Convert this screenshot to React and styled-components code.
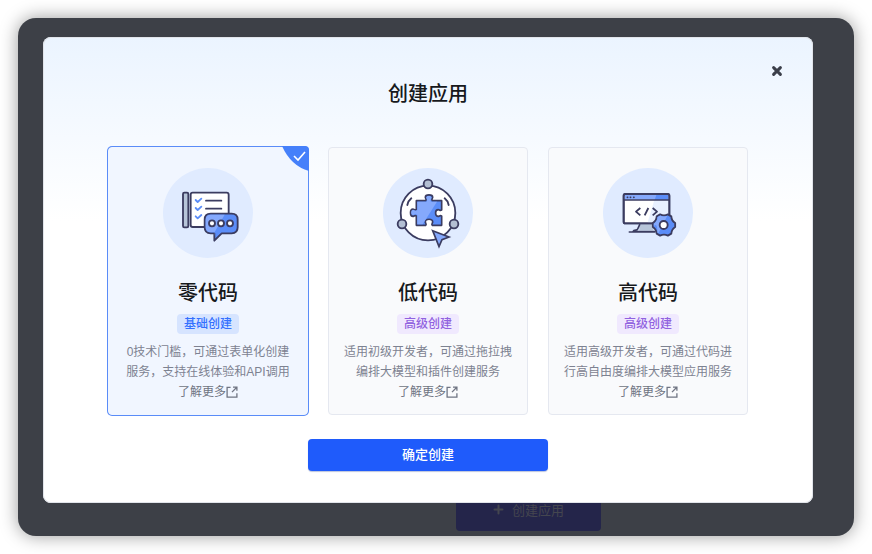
import { useState } from 'react';
import styled, { createGlobalStyle } from 'styled-components';

const ink = '#3b3c60';

const GlobalStyle = createGlobalStyle`
  * {
    box-sizing: border-box;
  }

  body {
    margin: 0;
    background: #ffffff;
    font-family: 'Liberation Sans', 'Noto Sans CJK SC', sans-serif;
  }

  h2,
  h3,
  p {
    margin: 0;
    font-weight: 500;
  }
`;

const Page = styled.main`
  padding: 18px;
`;

const Window = styled.div`
  display: grid;
  border-radius: 18px;
  background: #3d4047;
  box-shadow: 0 0 18px rgba(0, 0, 0, 0.4);
`;

const Backdrop = styled.div`
  grid-area: 1 / 1;
  display: flex;
  justify-content: center;
  align-items: flex-end;
  padding: 0 0 5px 185px;
`;

const BackdropButton = styled.button`
  display: flex;
  align-items: center;
  justify-content: center;
  gap: 8px;
  width: 145px;
  height: 40px;
  padding-bottom: 4px;
  border: 0;
  border-radius: 4px;
  background: #24254a;
  color: #44464f;
  font: inherit;
  font-size: 13px;
`;

const Modal = styled.section`
  grid-area: 1 / 1;
  z-index: 1;
  display: flex;
  flex-direction: column;
  align-items: center;
  margin: 19px 41px 33px 25px;
  padding: 24px 26px 32px;
  border-radius: 8px;
  background: linear-gradient(#ebf4ff, #ffffff 184px);
  box-shadow: inset 0 0 0 1px #e1e4ea;
`;

const CloseButton = styled.button`
  display: flex;
  align-self: flex-end;
  padding: 4px;
  border: 0;
  background: none;
  color: #3b3f4a;
`;

const ModalTitle = styled.h2`
  font-size: 20px;
  line-height: 26px;
  color: #17191c;
`;

const CardList = styled.div`
  display: grid;
  grid-template-columns: repeat(3, 200px);
  gap: 20px;
  margin: 40px 0 24px;
`;

const Card = styled.label`
  position: relative;
  display: flex;
  flex-direction: column;
  align-items: center;
  padding: 20px 14px 12px;
  border: 1px solid ${({ $active }) => ($active ? '#f1f6ff' : '#e5e8f0')};
  border-radius: 4px;
  background: ${({ $active }) => ($active ? '#f1f6ff' : '#f9fafc')};
  box-shadow: ${({ $active }) => ($active ? '0 0 0 1px #5a8cf8' : 'none')};
  text-align: center;
  cursor: pointer;
`;

const CardRadio = styled.input`
  position: absolute;
  opacity: 0;
`;

const CheckCorner = styled.svg`
  position: absolute;
  top: -2px;
  right: -2px;
`;

const CardTitle = styled.h3`
  margin: 21px 0 7px;
  font-size: 20px;
  line-height: 28px;
  color: #17191c;
`;

const Tag = styled.span`
  margin-bottom: 8px;
  padding: 0 7px;
  border-radius: 4px;
  background: ${({ $active }) => ($active ? '#d6e4ff' : '#f0e9fe')};
  color: ${({ $active }) => ($active ? '#3370ff' : '#9061e0')};
  font-size: 12px;
  font-weight: 500;
  line-height: 20px;
`;

const CardText = styled.p`
  font-size: 12px;
  font-weight: 400;
  line-height: 20px;
  color: #7d8291;
`;

const MoreLink = styled.a`
  display: flex;
  align-items: center;
  font-size: 12px;
  line-height: 20px;
  color: #6f7482;
  text-decoration: none;
`;

const SubmitButton = styled.button`
  width: 240px;
  height: 32px;
  padding: 0 0 4px;
  border: 0;
  border-radius: 4px;
  background: #1f5bfb;
  box-shadow: 0 1px 1px rgba(31, 60, 140, 0.3);
  color: #ffffff;
  font: inherit;
  font-size: 13px;
  font-weight: 500;
`;

const CloseIcon = () => (
  <svg width="12" height="12" viewBox="0 0 12 12" stroke="currentColor" strokeWidth="3" strokeLinecap="round">
    <path d="M2.6 2.6l6.8 6.8M9.4 2.6l-6.8 6.8" />
  </svg>
);

const PlusIcon = () => (
  <svg width="11" height="11" viewBox="0 0 11 11" stroke="currentColor" strokeWidth="2" strokeLinecap="round">
    <path d="M5.5 1.5v8M1.5 5.5h8" />
  </svg>
);

const OpenIcon = () => (
  <svg width="12" height="12" viewBox="0 0 12 12" fill="none" stroke="currentColor" strokeWidth="1.3">
    <path d="M4.6 1.3H1.1v9.8h9.8V7.2" />
    <path d="M7 1.2h3.9v3.6M10.8 1.3L6 6.1" />
  </svg>
);

// Icons share one 270-unit circle, offset by 9 on both axes
const IconFrame = ({ children }) => (
  <svg width="90" height="90" viewBox="9 9 270 270" fill="none" stroke={ink} strokeWidth="5.5" strokeLinejoin="round" strokeLinecap="round">
    <circle cx="144" cy="144" r="135" fill="#e0ebff" stroke="none" />
    {children}
  </svg>
);

const FormIcon = () => (
  <IconFrame>
    <rect x="69" y="83" width="16" height="104" rx="4" fill="#b7c5d9" />
    <rect x="92" y="83" width="114" height="103" rx="6" fill="#ffffff" />
    <g stroke="#5b8df8">
      <path d="M107 105l6 6 11-10" />
      <path d="M107 129l6 6 11-10" />
      <path d="M107 154l6 6 11-10" />
    </g>
    <path d="M138 107h46M138 131h46" />
    <path
      d="M152 146h63q18 0 18 18v23q0 18-18 18h-30l-22 22v-22h-11q-18 0-18-18v-23q0-18 18-18z"
      fill="#5b8df8"
    />
    <path d="M153 149h41l-30 52-1 14v-13h-11q-15 0-15-15v-23q0-15 16-15z" fill="#85a9fc" stroke="none" />
    <g fill="#ffffff">
      <circle cx="156" cy="175" r="9" />
      <circle cx="183" cy="175" r="9" />
      <circle cx="210" cy="175" r="9" />
    </g>
  </IconFrame>
);

const PuzzleIcon = () => (
  <IconFrame>
    <circle cx="144" cy="144" r="82" fill="#ffffff" />
    <path d="M94 100q-10 8-12 20M194 100q10 8 12 20" />
    <path
      d="M109 107h28c4-4-1-7-1-10 0-10 22-10 22 0 0 3-5 6-1 10h28v28c-4 4-7-1-10-1-11 0-11 20 0 20 3 0 6-5 10-1v28h-28c-4-4 1-7 1-10 0-11-22-11-22 0 0 3 5 6 1 10h-28v-28c-4-4-7 1-10 1-10 0-10-22 0-22 3 0 6 5 10 1z"
      fill="#5b8df8"
      strokeWidth="5"
    />
    <path
      d="M112 110h28c4-4-1-9-1-12 0-7 15-7 15 0 0 3-5 8-1 12h18l-43 68h-16v-28c-5-5-10 0-13 0-7 0-7-15 0-15 3 0 8 5 13 0z"
      fill="#85a9fc"
      stroke="none"
    />
    <g fill="#b3bfd3">
      <circle cx="144" cy="57" r="13" />
      <circle cx="66" cy="177" r="13" />
      <circle cx="222" cy="177" r="13" />
    </g>
    <path d="M158 197l49 19-21 8-9 21z" fill="#85a9fc" strokeWidth="5" strokeLinejoin="miter" />
  </IconFrame>
);

const CodeIcon = () => (
  <IconFrame>
    <path d="M118 178h42v18h-42z" fill="#b7c5d9" stroke="none" />
    <path d="M119 179l-6 13q-1 3-6 3-6 0-8 5h66M88 201h76" strokeWidth="5" />
    <rect x="71" y="87" width="137" height="88" rx="5" fill="#ffffff" />
    <path d="M163 105h42v67h-62z" fill="#e8f0ff" stroke="none" />
    <path d="M74 88h131v16H74z" fill="#85a9fc" stroke="none" />
    <path d="M170 88h35v16h-41z" fill="#5b8df8" stroke="none" />
    <rect x="71" y="87" width="137" height="88" rx="5" />
    <path d="M72 105h135" strokeWidth="5" />
    <path d="M82 97h1M91 97h1M101 97h1" strokeWidth="5" />
    <path d="M121 129l-13 11 13 11M145 129l-11 22M158 129l13 11-13 11" strokeLinecap="butt" />
    <g transform="translate(192 180)">
      <path
        d="M33.5-5.9V5.9Q22.5 13 21.9 26L11.6 31.9Q0 26-11.6 31.9L-21.9 26Q-22.5 13-33.5 5.9V-5.9Q-22.5-13-21.9-26L-11.6-31.9Q0-26 11.6-31.9L21.9-26Q22.5-13 33.5-5.9z"
        fill="#5b8df8"
      />
      <path d="M-11.6-28.5Q0-23 10-28L-17 24.5-19.4 23.5Q-20-10-30.7 4V-4Q-20-11-19.4-24z" fill="#85a9fc" stroke="none" />
      <circle cx="-1" cy="0" r="12" fill="#ffffff" />
    </g>
  </IconFrame>
);

const options = [
  { id: 'none', title: '零代码', tag: '基础创建', text: '0技术门槛，可通过表单化创建服务，支持在线体验和API调用', Icon: FormIcon },
  { id: 'low', title: '低代码', tag: '高级创建', text: '适用初级开发者，可通过拖拉拽编排大模型和插件创建服务', Icon: PuzzleIcon },
  { id: 'high', title: '高代码', tag: '高级创建', text: '适用高级开发者，可通过代码进行高自由度编排大模型应用服务', Icon: CodeIcon },
];

export default function App() {
  const [selected, setSelected] = useState('none');

  return (
    <>
      <GlobalStyle />
      <Page>
        <Window>
          <Backdrop>
            <BackdropButton type="button">
              <PlusIcon />
              创建应用
            </BackdropButton>
          </Backdrop>
          <Modal>
            <CloseButton type="button" aria-label="关闭">
              <CloseIcon />
            </CloseButton>
            <ModalTitle>创建应用</ModalTitle>
            <CardList>
              {options.map(({ id, title, tag, text, Icon }) => (
                <Card key={id} $active={id === selected}>
                  <CardRadio type="radio" name="mode" checked={id === selected} onChange={() => setSelected(id)} />
                  {id === selected && (
                    <CheckCorner width="27" height="25" viewBox="0 0 27 25">
                      <path d="M0 0h23q4 0 4 4v21Q9 20 0 0z" fill="#4580fa" />
                      <path d="M12 10l4 4 7-8" fill="none" stroke="#ffffff" strokeWidth="1.6" />
                    </CheckCorner>
                  )}
                  <Icon />
                  <CardTitle>{title}</CardTitle>
                  <Tag $active={id === 'none'}>{tag}</Tag>
                  <CardText>{text}</CardText>
                  <MoreLink href="#more">
                    了解更多
                    <OpenIcon />
                  </MoreLink>
                </Card>
              ))}
            </CardList>
            <SubmitButton type="button">确定创建</SubmitButton>
          </Modal>
        </Window>
      </Page>
    </>
  );
}
